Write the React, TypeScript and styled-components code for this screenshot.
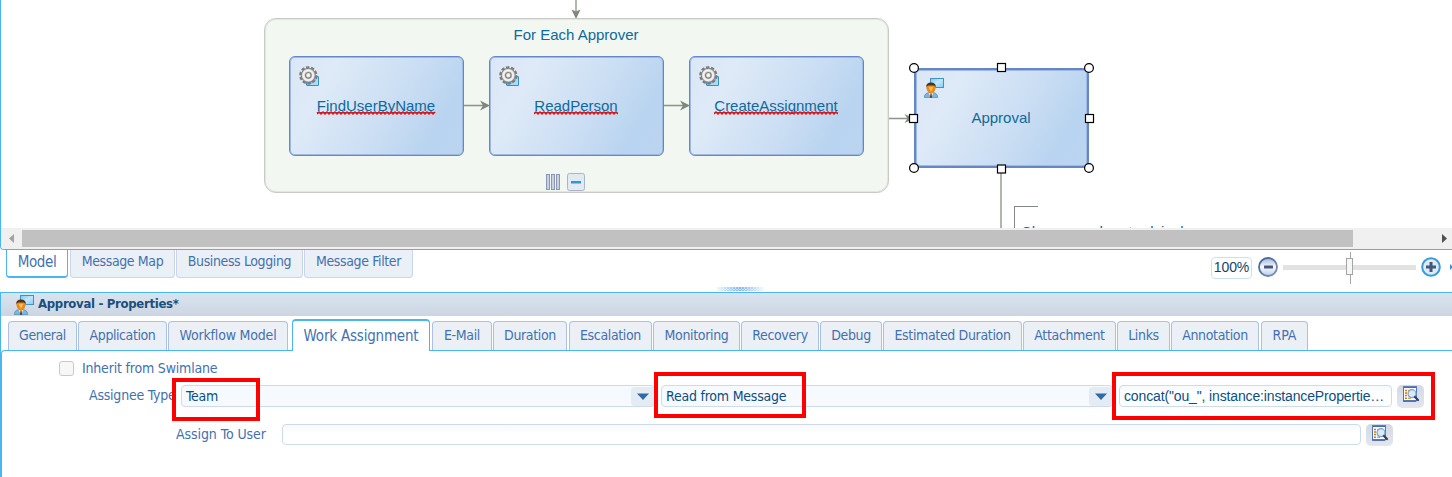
import React from "react";
import styled, { createGlobalStyle } from "styled-components";

const ui = `"DejaVu Sans Condensed", Tahoma, "DejaVu Sans", sans-serif`;
const arial = `"Liberation Sans", Arial, sans-serif`;
const sky = "#4ab5f0";

const Global = createGlobalStyle`
  * { box-sizing: border-box; }
  body { margin: 0; background: #fff; font-family: ${ui}; font-size: 14px; color: #4470b0; }
`;

const Page = styled.div`
  position: relative;
  width: 1452px;
  height: 477px;
  overflow: hidden;
  display: flex;
  flex-direction: column;
`;

const Editor = styled.section`
  height: 250px;
  flex: none;
  border-left: 1px solid ${sky};
  border-bottom: 1px solid ${sky};
  border-bottom-left-radius: 4px;
  overflow: hidden;
`;

/* Diagram canvas */
const Canvas = styled.div`
  position: relative;
  height: 228px;
  margin-left: -1px;
  border-left: 1px solid ${sky};
  overflow: hidden;
  font-family: ${arial};
  font-size: 15px;
  color: #0f699c;
`;

const Plane = styled.div`
  position: absolute;
  inset: 0 0 0 -1px;
`;

const Edges = styled.svg`
  position: absolute;
  inset: 0;
`;

const Group = styled.div`
  position: absolute;
  left: 264px;
  top: 18px;
  width: 625px;
  height: 175px;
  border: 1px solid #c6cbc5;
  border-radius: 12px;
  background: #f2f7f2;
  box-shadow: inset 0 0 0 1px #e2e7e0;
  text-align: center;
  padding: 7px 1px 0 0;
  line-height: 18px;
`;

const Node = styled.div<{ $x: number; $y: number; $selected?: boolean }>`
  position: absolute;
  left: ${(p) => p.$x}px;
  top: ${(p) => p.$y}px;
  width: 175px;
  height: 100px;
  border: ${(p) => (p.$selected ? 2 : 1)}px solid #6686c4;
  border-radius: 6px;
  box-shadow: inset 0 0 0 1px #9db9e4;
  background: linear-gradient(120deg, #dbe7f6 0%, #deeaf7 22%, #c9ddf3 60%, #b9d4f0 82%, #bbd5f1 100%);
  display: flex;
  align-items: center;
  justify-content: center;
  padding: 0 1px 1px 0;
`;

const NodeIcon = styled.span<{ $inset: number }>`
  position: absolute;
  left: ${(p) => p.$inset}px;
  top: ${(p) => p.$inset}px;
  display: flex;
`;

const Misspelled = styled.span`
  display: inline-block;
  line-height: 17px;
  text-decoration: underline 1px;
  text-underline-offset: 1px;
`;

const WordBox = styled.span`
  position: relative;
`;

const Squiggle = styled.svg`
  position: absolute;
  left: 0;
  bottom: -1px;
`;

const Annotation = styled.div`
  position: absolute;
  left: 1014px;
  top: 206px;
  width: 24px;
  height: 40px;
  border: solid #85888a;
  border-width: 1px 0 0 1px;
  padding: 16px 0 0 6px;
  line-height: 17px;
  white-space: nowrap;
`;

/* Horizontal scroll bar */
const ScrollBar = styled.div`
  height: 21px;
  background: #f0f0f0;
  display: flex;
  align-items: center;
`;
const ScrollArrow = styled.svg`
  width: 21px;
  height: 17px;
`;
const ScrollThumb = styled.div`
  width: 1331px;
  height: 17px;
  background: #c1c1c1;
`;
const ScrollRest = styled.div`
  flex: 1;
`;

/* Bottom editor tabs and zoom control */
const ViewBar = styled.div`
  height: 42px;
  flex: none;
  display: flex;
  align-items: flex-start;
  padding-left: 6px;
`;

const ViewTab = styled.div<{ $w: number; $active?: boolean; $gap?: number }>`
  width: ${(p) => p.$w}px;
  height: 28px;
  margin-right: ${(p) => p.$gap ?? 0}px;
  border: 1px solid ${(p) => (p.$active ? sky : "#c9d6ea")};
  border-bottom-width: ${(p) => (p.$active ? 2 : 1)}px;
  border-top: 0;
  border-radius: 0 0 4px 4px;
  background: ${(p) => (p.$active ? "#fff" : "#ebf0f7")};
  font-size: ${(p) => (p.$active ? 15 : 14)}px;
  letter-spacing: -0.38px;
  line-height: ${(p) => (p.$active ? 24 : 23)}px;
  text-align: center;
  white-space: nowrap;
`;

const Zoom = styled.div`
  display: flex;
  align-items: center;
  margin-left: auto;
  height: 36px;
`;
const Percent = styled.div`
  width: 41px;
  height: 22px;
  border: 1px solid #cfdff0;
  border-radius: 4px;
  color: #17436b;
  font: 14px/19px ${arial};
  text-align: center;
  letter-spacing: -0.1px;
`;

/* Properties panel */
const Panel = styled.section`
  position: relative;
  flex: 1;
  border-top: 1px solid ${sky};
  border-left: 1px solid ${sky};
  display: flex;
  flex-direction: column;
`;
const Grip = styled.svg`
  position: absolute;
  left: 714px;
  top: -6px;
`;
const PanelTitle = styled.header`
  height: 23px;
  background: linear-gradient(#dae4ef, #ccd6e2);
  display: flex;
  align-items: center;
  padding-left: 13px;
  gap: 4px;
  font-weight: bold;
  font-size: 13px;
  letter-spacing: -0.3px;
  color: #1b4f80;
`;
const PanelText = styled.span`
  padding-bottom: 2px;
`;

const TabStrip = styled.nav`
  height: 34px;
  display: flex;
  align-items: flex-end;
  padding-left: 7px;
`;
const Tab = styled.div<{ $w: number; $gap: number; $active?: boolean; $track?: number }>`
  width: ${(p) => p.$w}px;
  height: ${(p) => (p.$active ? 32 : 29)}px;
  margin-right: ${(p) => p.$gap}px;
  margin-bottom: ${(p) => (p.$active ? -1 : 0)}px;
  border: 1px solid ${(p) => (p.$active ? sky : "#acc1df")};
  border-top-width: ${(p) => (p.$active ? 2 : 1)}px;
  border-bottom: 0;
  border-radius: 4px 4px 0 0;
  background: ${(p) => (p.$active ? "#fff" : "#ebf0f7")};
  font-size: ${(p) => (p.$active ? 15 : 14)}px;
  line-height: ${(p) => (p.$active ? 31 : 27)}px;
  letter-spacing: ${(p) => p.$track ?? -0.35}px;
  text-align: center;
  white-space: nowrap;
  position: relative;
  z-index: ${(p) => (p.$active ? 1 : 0)};
`;

const Form = styled.div`
  flex: 1;
  border-top: 1px solid ${sky};
  border-left: 1px solid ${sky};
  border-top-left-radius: 4px;
  padding-top: 7px;
`;
const Row = styled.div<{ $h: number; $pad: number }>`
  height: ${(p) => p.$h}px;
  padding-left: ${(p) => p.$pad}px;
  display: flex;
  align-items: center;
`;
const CheckBox = styled.span`
  width: 15px;
  height: 15px;
  margin-right: 8px;
  border: 1px solid #c9c9c9;
  border-radius: 3px;
  background: #f7f7f7;
`;
const Label = styled.label<{ $w: number; $track: number; $lift?: number }>`
  width: ${(p) => p.$w}px;
  padding-bottom: ${(p) => p.$lift ?? 2}px;
  white-space: nowrap;
  letter-spacing: ${(p) => p.$track}px;
`;
const Field = styled.div<{ $w: number; $h: number; $tint?: boolean; $gap: number }>`
  width: ${(p) => p.$w}px;
  height: ${(p) => p.$h}px;
  margin-right: ${(p) => p.$gap}px;
  border: 1px solid #cddcec;
  border-radius: 4px;
  background: ${(p) => (p.$tint ? "#f6f9fe" : "linear-gradient(#f7f9fd, #fff 45%)")};
  display: flex;
  align-items: center;
  justify-content: space-between;
  padding-left: 4px;
  color: #0b4f82;
  letter-spacing: -0.22px;
  white-space: nowrap;
`;
const Expression = styled.span`
  font: 14px ${arial};
  letter-spacing: -0.14px;
`;
const DropButton = styled.span`
  width: 24px;
  height: 19px;
  margin-right: -1px;
  background: #e3ebf5;
  border-radius: 4px;
  display: flex;
  align-items: center;
  justify-content: center;
`;
const LookupButton = styled.span<{ $h: number }>`
  width: 27px;
  height: ${(p) => p.$h}px;
  border-radius: 5px;
  background: linear-gradient(#d3d9e2, #e2e7ef);
  display: flex;
  justify-content: center;
  padding: 1px 0 0 1px;
`;

const Highlight = styled.div<{ $x: number; $y: number; $w: number; $h: number }>`
  position: absolute;
  left: ${(p) => p.$x}px;
  top: ${(p) => p.$y}px;
  width: ${(p) => p.$w}px;
  height: ${(p) => p.$h}px;
  border: 4px solid #fe0000;
`;

const GearIcon = () => (
  <svg width="21" height="21" viewBox="0 0 21 21">
    <rect x="7.5" y="10.5" width="12" height="9" rx=".5" fill="#74c4f3" stroke="#3790cb" />
    <path d="M11 19L19 12V19Z" fill="#a9dcf9" />
    <circle cx="9.300" cy="9.300" r="7.600" fill="none" stroke="#7b7b79" strokeWidth="3" strokeDasharray="3.200 1.575" />
    <circle cx="9.300" cy="9.300" r="7" fill="#d2d2d0" stroke="#7f7f7d" strokeWidth="1" />
    <circle cx="9.300" cy="9.300" r="4.900" fill="none" stroke="#f3f3f2" strokeWidth="1.800" />
    <circle cx="9.300" cy="9.300" r="2.800" fill="#e4e4e2" stroke="#808080" strokeWidth="1.200" />
    <circle cx="9.300" cy="9.300" r="1.100" fill="#fff" />
  </svg>
);

const UserIcon = () => (
  <svg width="20" height="20" viewBox="0 0 20 20">
    <defs>
      <linearGradient id="screen" x1="0" y1="0" x2="1" y2="1">
        <stop offset="0" stopColor="#7cc8f4" />
        <stop offset=".5" stopColor="#c2e7fb" />
        <stop offset="1" stopColor="#82caf3" />
      </linearGradient>
    </defs>
    <rect x="6.500" y=".5" width="13" height="9" fill="url(#screen)" stroke="#3f92cc" />
    <path d="M.3 19.700C.3 16.500 2 15 5 14.500H9C12 15 13.700 16.500 13.700 19.700Z" fill="#7db6dd" stroke="#3c7fae" strokeWidth=".6" />
    <path d="M4.500 14.500L7 19.500L9.500 14.500Z" fill="#fff" />
    <path d="M6.500 15.500H7.500L8 19.700H6Z" fill="#4b3420" />
    <path d="M2.300 9C2.300 6.500 4.500 5.500 7 5.500S11.700 6.500 11.700 9C11.700 12.500 9 15.800 7 15.800S2.300 12.500 2.300 9Z" fill="#e98a1a" />
    <path d="M4.500 8.800H9.500L7 14Z" fill="#fbb95a" />
    <path d="M2.300 9C2 6 3.800 4.500 7 4.500S12 6 11.700 9L10 7.500H4Z" fill="#4b3420" />
  </svg>
);

const LookupIcon = () => (
  <svg width="18" height="17" viewBox="0 0 18 17">
    <path d="M1.500 1.500H14.500V15H1.500Z" fill="#fff" stroke="#4a74c4" />
    <path d="M1 .9H15M1.100 15H14" stroke="#3c60b4" strokeWidth="1.400" />
    <path d="M3 4.500H5M3 7H5M3 9.500H5M3 12.200H5" stroke="#c8791b" strokeWidth="1.500" />
    <path d="M6 4.500H8M6 7H7M6 9.500H7M6 12.200H9" stroke="#e5a84c" strokeWidth="1.500" />
    <circle cx="10" cy="7.700" r="4" fill="#d5e6fa" fillOpacity=".9" stroke="#7e9fd2" strokeWidth="1.200" />
    <path d="M13 11L16 14" stroke="#333f55" strokeWidth="2.200" strokeLinecap="round" />
  </svg>
);

const ZoomSlider = () => (
  <svg width="200" height="36" viewBox="1252 250 200 36">
    <defs>
      <linearGradient id="knob" x1="0" y1="0" x2="0" y2="1">
        <stop offset="0" stopColor="#9fb5d8" />
        <stop offset=".5" stopColor="#f7faff" />
        <stop offset="1" stopColor="#b9cbe6" />
      </linearGradient>
      <linearGradient id="ring" x1="0" y1="0" x2="1" y2="1">
        <stop offset="0" stopColor="#3e5c98" />
        <stop offset="1" stopColor="#8096b8" />
      </linearGradient>
    </defs>
    <circle cx="1268" cy="267" r="9" fill="url(#knob)" stroke="url(#ring)" strokeWidth="1.800" />
    <rect x="1264" y="265.500" width="9" height="3" rx=".5" fill="#455878" />
    <rect x="1283" y="265" width="133" height="5" fill="#e2e2e2" />
    <path d="M1350.500 252V284" stroke="#a5a5a5" />
    <rect x="1346.500" y="258.500" width="6" height="16" fill="#f3f8f6" stroke="#a5a5a5" />
    <circle cx="1431" cy="267" r="8.800" fill="#dcebf8" stroke="#3a9bdc" strokeWidth="2" />
    <path d="M1431 262V272M1426 267H1436" stroke="#46577a" strokeWidth="3" />
    <path d="M1450 264L1452 266V268L1450 270Z" fill="#3a8fd0" />
  </svg>
);

const words = [
  { x: 289, text: "FindUserByName", w: 119 },
  { x: 489, text: "ReadPerson", w: 84 },
  { x: 689, text: "CreateAssignment", w: 124 },
];

const wave = (w: number) => {
  let d = "M0 3";
  for (let x = 2, up = true; x <= w; x += 2, up = !up) d += `L${x} ${up ? 1 : 3}`;
  return d;
};

const handles = [
  [914, 68, 1], [1089, 68, 1], [914, 168, 1], [1089, 168, 1],
  [1001.5, 67.5, 0], [1001.5, 169, 0], [913.5, 118.5, 0], [1089.5, 118.5, 0],
];

const tabs: { t: string; w: number; g: number; active?: boolean; k?: number }[] = [
  { t: "General", w: 69, g: 1, k: -0.4 },
  { t: "Application", w: 89, g: 1, k: -0.42 },
  { t: "Workflow Model", w: 120, g: 4, k: -0.18 },
  { t: "Work Assignment", w: 138, g: 2, active: true, k: -0.2 },
  { t: "E-Mail", w: 60, g: 1 },
  { t: "Duration", w: 74, g: 2 },
  { t: "Escalation", w: 83, g: 1 },
  { t: "Monitoring", w: 87, g: 1 },
  { t: "Recovery", w: 78, g: 1 },
  { t: "Debug", w: 62, g: 1 },
  { t: "Estimated Duration", w: 139, g: 1 },
  { t: "Attachment", w: 93, g: 1 },
  { t: "Links", w: 53, g: 1 },
  { t: "Annotation", w: 88, g: 2 },
  { t: "RPA", w: 47, g: 0, k: -0.1 },
];

const DropArrow = () => (
  <svg width="12" height="7"><path d="M0 .5H12L6 7Z" fill="#3069a5" /></svg>
);

export default function App() {
  return (
    <Page>
      <Global />
      <Editor>
        <Canvas>
          <Plane>
            <Group>For Each Approver</Group>
            {words.map((n) => (
              <Node key={n.text} $x={n.x} $y={56}>
                <NodeIcon $inset={9}><GearIcon /></NodeIcon>
                <WordBox>
                  <Misspelled>{n.text}</Misspelled>
                  <Squiggle width={n.w} height="4">
                    <path d={wave(n.w)} fill="none" stroke="#ff0a0a" strokeWidth="1.500" />
                  </Squiggle>
                </WordBox>
              </Node>
            ))}
            <Edges width="1452" height="228">
              <g stroke="#8b9488" strokeWidth="1.300" fill="none">
                <path d="M576 0V12M464 105.500H484M664 105.500H684M889 118.500H908" />
                <path d="M1001 172V228" stroke="#b0b7ab" strokeWidth="2" />
              </g>
              <g fill="#7d877b">
                <path d="M571.500 9.500L576 11.500L580.500 9.500L576.500 18H575.500Z" />
                <path d="M480 100.500L490 105.500L480 110.500L483 105.500Z" />
                <path d="M680 100.500L690 105.500L680 110.500L683 105.500Z" />
                <path d="M904.500 114L914 118.500L904.500 123L907.500 118.500Z" />
              </g>
              <g fill="#c9d1e0" stroke="#8797b5">
                <rect x="546.500" y="174.500" width="3" height="15" />
                <rect x="551.500" y="174.500" width="3" height="15" />
                <rect x="556.500" y="174.500" width="3" height="15" />
              </g>
              <rect x="567.500" y="173.500" width="17" height="17" rx="2" fill="#e3e9f3" stroke="#aab5c8" />
              <rect x="571" y="181" width="10" height="2.500" fill="#2b97dc" />
            </Edges>
            <Node $x={914} $y={68} $selected>
              <NodeIcon $inset={8}><UserIcon /></NodeIcon>
              Approval
            </Node>
            <Annotation>Change and rout advisel</Annotation>
            <Edges width="1452" height="228">
              <g fill="#fff" stroke="#000" strokeWidth="1.200">
                {handles.map(([x, y, round], i) =>
                  round ? (
                    <circle key={i} cx={x} cy={y} r="4.400" />
                  ) : (
                    <rect key={i} x={x - 4} y={y - 4} width="8" height="8" />
                  )
                )}
              </g>
            </Edges>
          </Plane>
        </Canvas>
        <ScrollBar>
          <ScrollArrow><path d="M13 4V13L8 8.500Z" fill="#a3a3a3" /></ScrollArrow>
          <ScrollThumb />
          <ScrollRest />
          <ScrollArrow><path d="M11 4V13L16 8.500Z" fill="#505050" /></ScrollArrow>
        </ScrollBar>
      </Editor>

      <ViewBar>
        <ViewTab $w={62} $gap={2} $active>Model</ViewTab>
        <ViewTab $w={105} $gap={1}>Message Map</ViewTab>
        <ViewTab $w={127} $gap={1}>Business Logging</ViewTab>
        <ViewTab $w={109}>Message Filter</ViewTab>
        <Zoom>
          <Percent>100%</Percent>
          <ZoomSlider />
        </Zoom>
      </ViewBar>

      <Panel>
        <Grip width="50" height="4">
          <defs>
            <pattern id="dots" width="3" height="3" patternUnits="userSpaceOnUse">
              <circle cx="1" cy="1" r=".9" fill="#6aa6ea" />
              <circle cx="2.500" cy="2.500" r=".7" fill="#8fbdf0" />
            </pattern>
            <linearGradient id="fade">
              <stop offset="0" stopColor="#000" />
              <stop offset=".5" stopColor="#fff" />
              <stop offset="1" stopColor="#000" />
            </linearGradient>
            <mask id="soft"><rect width="50" height="5" fill="url(#fade)" /></mask>
          </defs>
          <rect width="50" height="4" fill="#c3dcf8" mask="url(#soft)" />
          <rect width="50" height="4" fill="url(#dots)" mask="url(#soft)" />
        </Grip>
        <PanelTitle>
          <UserIcon />
          <PanelText>Approval - Properties*</PanelText>
        </PanelTitle>
        <TabStrip>
          {tabs.map((t) => (
            <Tab key={t.t} $w={t.w} $gap={t.g} $active={t.active} $track={t.k}>{t.t}</Tab>
          ))}
        </TabStrip>
        <Form>
          <Row $h={20} $pad={57}>
            <CheckBox />
            <Label $w={140} $track={-0.19} $lift={0}>Inherit from Swimlane</Label>
          </Row>
          <Row $h={36} $pad={87}>
            <Label $w={92} $track={-0.22}>Assignee Type</Label>
            <Field $w={474} $h={22} $tint $gap={6}>
              Team
              <DropButton><DropArrow /></DropButton>
            </Field>
            <Field $w={452} $h={22} $tint $gap={6}>
              Read from Message
              <DropButton><DropArrow /></DropButton>
            </Field>
            <Field $w={273} $h={22} $gap={5}>
              <Expression>concat("ou_", instance:instancePropertie…</Expression>
            </Field>
            <LookupButton $h={23}><LookupIcon /></LookupButton>
          </Row>
          <Row $h={41} $pad={174}>
            <Label $w={106} $track={-0.08}>Assign To User</Label>
            <Field $w={1079} $h={21} $gap={5} />
            <LookupButton $h={22}><LookupIcon /></LookupButton>
          </Row>
        </Form>
      </Panel>
      <Highlight $x={172} $y={378} $w={88} $h={43} />
      <Highlight $x={654} $y={372} $w={152} $h={46} />
      <Highlight $x={1112} $y={372} $w={323} $h={48} />
    </Page>
  );
}
